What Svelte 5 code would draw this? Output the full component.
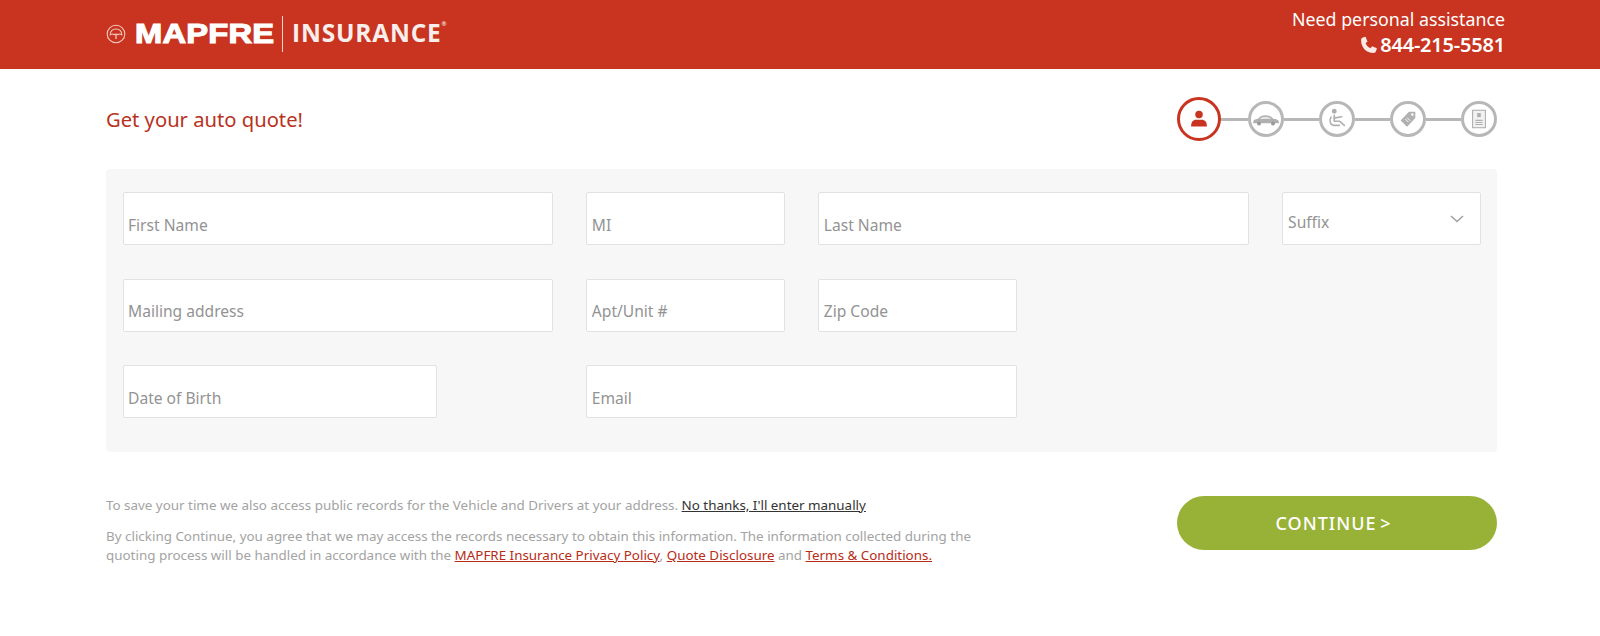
<script lang="ts">
	const rows = [
		{ name: 'first', label: 'First Name', span: 4 },
		{ name: 'mi', label: 'MI', span: 2 },
		{ name: 'last', label: 'Last Name', span: 4 }
	];
	const rowTwo = [
		{ name: 'address', label: 'Mailing address', span: 4 },
		{ name: 'apt', label: 'Apt/Unit #', span: 2 },
		{ name: 'zip', label: 'Zip Code', span: 2 }
	];
</script>

<header class="topbar">
	<div class="logo">
		<svg class="emblem" viewBox="0 0 20 20" aria-hidden="true">
			<circle cx="10" cy="10" r="8.800" fill="none" stroke="#f3c9c0" stroke-width="1.100" />
			<path d="M4.200 10.800C3.800 7.400 6.600 5 10 5s6.200 2.400 5.800 5.800c-1.200-1-2.800-1-3.900-.1-.6-.5-1.200-.7-1.900-.7s-1.300.2-1.900.7c-1.100-.9-2.700-.9-3.900.1z" fill="none" stroke="#f3c9c0" stroke-width="1.100" />
			<path d="M10 10v5" stroke="#f3c9c0" stroke-width="1.300" />
		</svg>
		<span class="brand">MAPFRE</span>
		<span class="divider"></span>
		<span class="product">INSURANCE</span>
		<sup class="reg">®</sup>
	</div>
	<div class="contact">
		<div class="assist">Need personal assistance</div>
		<div class="phone">
			<svg viewBox="0 0 24 24" aria-hidden="true">
				<path d="M4.500 3l3.300-1 2.400 5.800-2.300 2c1.100 2.700 3.100 4.800 5.800 6l2-2.300 5.800 2.400-1 3.300c-.4 1.400-1.700 2.300-3.200 2.300C9 21.500 2.500 15 2.500 6.200 2.500 4.700 3.200 3.500 4.500 3z" fill="#fbe9e6" />
			</svg>
			<span>844-215-5581</span>
		</div>
	</div>
</header>

<main class="page">
	<div class="title-row">
		<h1>Get your auto quote!</h1>
		<div class="steps">
			<span class="step active">
				<svg viewBox="0 0 24 24" aria-hidden="true">
					<circle cx="12" cy="6.500" r="4.500" fill="#c8341f" />
					<path d="M2.500 21c0-5.500 2.500-8 6-8h7c3.500 0 6 2.500 6 8z" fill="#c8341f" />
				</svg>
			</span>
			<span class="link short"></span>
			<span class="step">
				<svg class="wide" viewBox="0 0 24 24" aria-hidden="true">
					<path d="M1 14.500c0-1.500 1.500-2.300 4-2.700 1.800-2 3.800-3 6.500-3 3 0 5 1.200 6.800 3 2.600.3 4.700 1 4.700 2.700v1.200H1z" fill="#b0b0b0" />
					<path d="M6.500 12c1.500-1.400 3-2 5-2 2 0 3.500.6 5 2z" fill="#e4e4e4" />
					<circle cx="6" cy="15.800" r="1.700" fill="#999" />
					<circle cx="18" cy="15.800" r="1.700" fill="#999" />
				</svg>
			</span>
			<span class="link"></span>
			<span class="step">
				<svg viewBox="0 0 24 24" aria-hidden="true">
					<g fill="none" stroke="#b0b0b0" stroke-width="1.800" stroke-linecap="round" stroke-linejoin="round">
						<circle cx="9" cy="3.500" r="1.800" fill="#b0b0b0" />
						<path d="M9 8v6.500h6l5 4.500" />
						<path d="M9 11l8-1.500" />
						<path d="M5.500 10c-2 3-1.500 8.500 3 9h6" />
					</g>
				</svg>
			</span>
			<span class="link"></span>
			<span class="step">
				<svg viewBox="0 0 24 24" aria-hidden="true">
					<path d="M13 4h7v7l-9 9.500-7-7z" fill="#b0b0b0" />
					<circle cx="16.800" cy="7.200" r="1.400" fill="#fff" />
					<path d="M9 12l3.500 3.500M11 10.500l3.500 3.500" stroke="#fff" stroke-width="1" />
				</svg>
			</span>
			<span class="link"></span>
			<span class="step">
				<svg viewBox="0 0 24 24" aria-hidden="true">
					<rect x="5" y="2.500" width="14" height="19" fill="#f2f2f2" stroke="#b0b0b0" stroke-width="1.200" />
					<rect x="10" y="5.500" width="4" height="4.500" fill="#b0b0b0" />
					<path d="M8 13.500h8M8 15.800h8M8 18h8" stroke="#b0b0b0" stroke-width="1.300" />
				</svg>
			</span>
		</div>
	</div>

	<form class="panel">
		{#each rows as field}
			<input class="span-{field.span}" type="text" name={field.name} placeholder={field.label} />
		{/each}
		<div class="select-wrap span-2">
			<select name="suffix">
				<option>Suffix</option>
				<option>Jr</option>
				<option>Sr</option>
			</select>
			<svg class="chevron" viewBox="0 0 14 8" aria-hidden="true">
				<path d="M1 1l6 5.500L13 1" fill="none" stroke="#a3a3a3" stroke-width="1.600" />
			</svg>
		</div>
		{#each rowTwo as field}
			<input class="span-{field.span}" type="text" name={field.name} placeholder={field.label} />
		{/each}
		<input class="dob" type="text" name="dob" placeholder="Date of Birth" />
		<input class="email" type="text" name="email" placeholder="Email" />
	</form>

	<div class="footer-row">
		<div class="legal">
			<p class="first">
				To save your time we also access public records for the Vehicle and Drivers at your address.
				<a class="dark" href="#manual">No thanks, I'll enter manually</a>
			</p>
			<p>
				By clicking Continue, you agree that we may access the records necessary to obtain this information. The information collected during the quoting process will be handled in accordance with the
				<a href="#privacy">MAPFRE Insurance Privacy Policy</a>, <a href="#disclosure">Quote Disclosure</a> and <a href="#terms">Terms &amp; Conditions.</a>
			</p>
		</div>
		<button class="continue" type="button">CONTINUE &gt;</button>
	</div>
</main>

<style>
	:global(body) {
		background: #fff;
		font-family: 'Noto Sans', 'Open Sans', sans-serif;
	}

	.topbar {
		height: 69px;
		box-sizing: border-box;
		background: #c8341f;
		display: flex;
		justify-content: space-between;
		align-items: center;
		padding: 0 95px 4px 106px;
		color: #fff;
	}

	.logo {
		display: flex;
		align-items: center;
		height: 36px;
		margin-top: 3px;
	}

	.emblem {
		width: 20px;
		height: 20px;
		margin-right: 9px;
	}

	.brand {
		font-family: 'Liberation Sans', sans-serif;
		font-weight: 700;
		font-size: 27px;
		letter-spacing: 0.2px;
		-webkit-text-stroke: 1.100px #fff;
		transform: scaleX(1.21);
		transform-origin: left center;
		width: 147px;
	}

	.divider {
		width: 1px;
		height: 36px;
		background: #f3d5cf;
		margin: 0 9px 0 0;
	}

	.product {
		font-family: 'Open Sans', sans-serif;
		font-weight: 700;
		font-size: 24.500px;
		letter-spacing: 0.8px;
		line-height: 36px;
		margin-top: -2px;
		color: #f9eeeb;
	}

	.reg {
		font-size: 6px;
		align-self: flex-start;
		margin: 5px 0 0 0;
		line-height: 1;
	}

	.contact {
		text-align: right;
	}

	.assist {
		font-size: 17.800px;
		line-height: 24px;
	}

	.phone {
		display: flex;
		justify-content: flex-end;
		align-items: center;
		font-size: 20px;
		font-weight: 600;
		line-height: 27px;
		letter-spacing: -0.2px;
	}

	.phone svg {
		width: 20px;
		height: 20px;
		margin-right: 1px;
	}

	.page {
		padding: 0 103px 0 106px;
	}

	.title-row {
		display: flex;
		justify-content: space-between;
		align-items: center;
		height: 100px;
	}

	h1 {
		margin: 0;
		font-size: 20.200px;
		font-weight: 400;
		color: #b8321e;
	}

	.steps {
		display: flex;
		align-items: center;
		width: 320px;
	}

	.step {
		box-sizing: border-box;
		width: 36px;
		height: 36px;
		flex: none;
		border: 3px solid #b7b7b7;
		border-radius: 50%;
		background: #fff;
		display: flex;
		align-items: center;
		justify-content: center;
	}

	.step svg {
		width: 22px;
		height: 22px;
	}

	.step svg.wide {
		width: 28px;
		height: 28px;
		flex: none;
	}

	.step.active {
		width: 44px;
		height: 44px;
		border-color: #c8341f;
	}

	.step.active svg {
		width: 20px;
		height: 20px;
	}

	.link {
		flex: 1;
		height: 3px;
		background: #b7b7b7;
	}

	.link.short {
		flex: 0.78;
	}

	.panel {
		box-sizing: border-box;
		height: 283px;
		background: #f7f7f7;
		border-radius: 4px;
		padding: 23px 16px 0 16.500px;
		display: grid;
		grid-template-columns: repeat(12, 1fr);
		grid-auto-rows: 53px;
		column-gap: 33px;
		row-gap: 33.700px;
	}

	input,
	select {
		box-sizing: border-box;
		width: 100%;
		height: 100%;
		margin: 0;
		background: #fff;
		border: 1px solid #e2e2e2;
		border-radius: 2px;
		font-family: inherit;
		font-size: 15.600px;
		color: #939393;
		outline: none;
	}

	input {
		padding: 12px 4.500px 0;
	}

	input::placeholder {
		color: #939393;
		opacity: 1;
	}

	select {
		appearance: none;
		padding: 6px 5px 0;
	}

	.span-2 {
		grid-column: span 2;
	}

	.span-4 {
		grid-column: span 4;
	}

	.dob {
		grid-column: 1 / span 3;
	}

	.email {
		grid-column: 5 / span 4;
	}

	.select-wrap {
		position: relative;
	}

	.chevron {
		position: absolute;
		right: 17px;
		top: 23px;
		width: 14px;
		height: 8px;
		pointer-events: none;
	}

	.footer-row {
		display: flex;
		justify-content: space-between;
		align-items: flex-start;
		padding-top: 44px;
	}

	.legal {
		width: 880px;
		font-size: 13.400px;
		line-height: 19px;
		color: #a3a3a3;
	}

	.legal p {
		margin: 0;
	}

	.legal .first {
		margin: 0 0 12px;
	}

	.legal a {
		color: #b82c17;
		text-decoration: underline;
	}

	.legal a.dark {
		color: #333;
	}

	.continue {
		width: 320px;
		height: 54px;
		flex: none;
		border: none;
		border-radius: 27px;
		background: #98b238;
		color: #fff;
		font-family: inherit;
		font-size: 18px;
		font-weight: 500;
		letter-spacing: 1px;
		word-spacing: -2px;
		padding: 0 7px 0 0;
		cursor: pointer;
	}
</style>
